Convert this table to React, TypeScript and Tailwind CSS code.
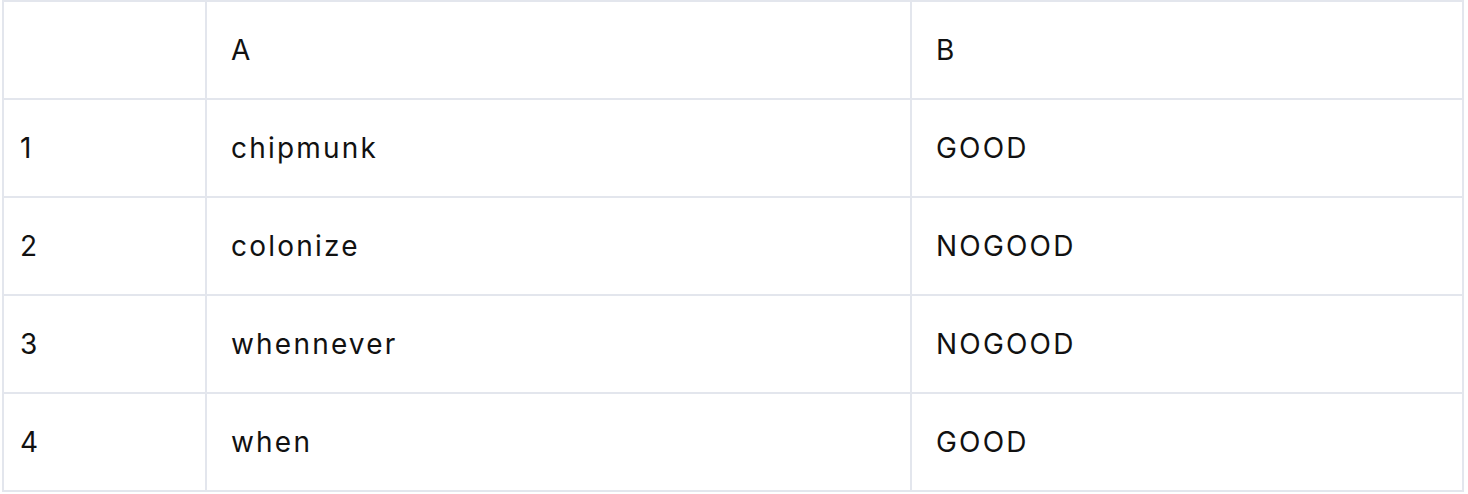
import React from "react";

const rows: [string, string, string][] = [
  ["", "A", "B"],
  ["1", "chipmunk", "GOOD"],
  ["2", "colonize", "NOGOOD"],
  ["3", "whennever", "NOGOOD"],
  ["4", "when", "GOOD"],
];

export default function App() {
  return (
    <div className="bg-white w-[1468px] h-[494px]" style={{ fontFamily: "Inter, 'Noto Sans', sans-serif" }}>
      <div className="ml-[2px] w-[1462px] border-t-2 border-l-2 border-[#e3e6ed] text-[28px] tracking-[2.2px] text-[#111111]">
        {rows.map((r, i) => (
          <div key={i} className="flex h-[98px]">
            <div className="w-[203px] border-r-2 border-b-2 border-[#e3e6ed] flex items-center pl-4">{r[0]}</div>
            <div className="w-[705px] border-r-2 border-b-2 border-[#e3e6ed] flex items-center pl-6">{r[1]}</div>
            <div className="w-[552px] border-r-2 border-b-2 border-[#e3e6ed] flex items-center pl-6">{r[2]}</div>
          </div>
        ))}
      </div>
    </div>
  );
}
